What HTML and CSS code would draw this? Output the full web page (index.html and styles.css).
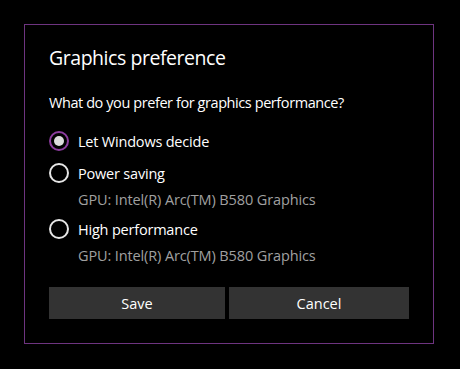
FILE: index.html
```html
<!DOCTYPE html>
<html>
<head>
<meta charset="utf-8">
<link rel="stylesheet" href="styles.css">
</head>
<body>
<div class="dialog">
  <div class="title">Graphics preference</div>
  <div class="question">What do you prefer for graphics performance?</div>
  <div class="options">
    <div class="opt">
      <span class="radio checked"></span>
      <span class="label">Let Windows decide</span>
    </div>
    <div class="opt">
      <span class="radio"></span>
      <span class="label">Power saving</span>
    </div>
    <div class="gpu">GPU: Intel(R) Arc(TM) B580 Graphics</div>
    <div class="opt opt3">
      <span class="radio"></span>
      <span class="label">High performance</span>
    </div>
    <div class="gpu">GPU: Intel(R) Arc(TM) B580 Graphics</div>
  </div>
  <div class="buttons">
    <div class="btn">Save</div>
    <div class="btn">Cancel</div>
  </div>
</div>
</body>
</html>
```
FILE: styles.css
```css
html, body {
  margin: 0;
  padding: 0;
  background: #000;
}
body {
  padding: 24px;
  font-family: "Open Sans", "Noto Sans", sans-serif;
  color: #fff;
}
.dialog {
  border: 1px solid #6e3480;
  padding: 19px 24px 0 24px;
  display: flex;
  flex-direction: column;
  box-sizing: border-box;
  width: 410px;
  height: 320px;
}
.title {
  font-size: 19.5px;
  letter-spacing: -0.45px;
  line-height: 28px;
  color: #fff;
}
.question {
  margin-top: 21px;
  font-size: 14.5px;
  letter-spacing: -0.42px;
  line-height: 20px;
  color: #fff;
}
.options {
  margin-top: 12px;
  display: flex;
  flex-direction: column;
}
.opt {
  display: flex;
  align-items: center;
  height: 32px;
  gap: 9px;
  font-size: 14.5px;
  letter-spacing: -0.2px;
}
.opt3 {
  margin-top: 3px;
}
.radio {
  width: 20px;
  height: 20px;
  box-sizing: border-box;
  border: 2px solid #e6e6e6;
  border-radius: 50%;
  display: flex;
  align-items: center;
  justify-content: center;
}
.radio.checked {
  border-color: #8c3c9e;
}
.radio.checked::after {
  content: "";
  width: 10px;
  height: 10px;
  border-radius: 50%;
  background: #dcdcdc;
}
.gpu {
  margin-top: 1px;
  padding-left: 29px;
  font-size: 14.5px;
  letter-spacing: -0.12px;
  line-height: 20px;
  color: #a0a0a0;
}
.buttons {
  margin-top: 21px;
  display: grid;
  grid-template-columns: 176px 180px;
  gap: 4px;
}
.btn {
  height: 32px;
  background: #333;
  display: flex;
  align-items: center;
  justify-content: center;
  font-size: 14.5px;
  color: #fff;
}
```
